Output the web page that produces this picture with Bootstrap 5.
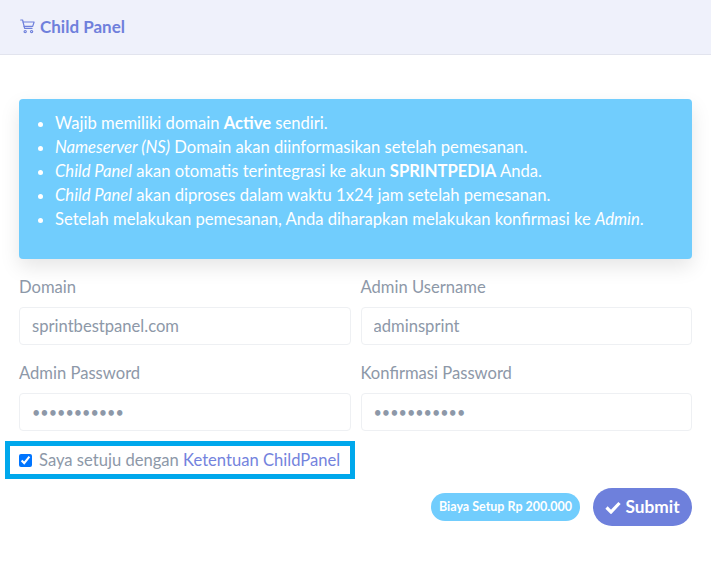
<!DOCTYPE html>
<html lang="en">
<head>
    <meta charset="UTF-8">
    <title>Child Panel</title>
    <link href="https://cdn.jsdelivr.net/npm/bootstrap@5.3.3/dist/css/bootstrap.min.css" rel="stylesheet">
    <style>
        body {
            font-family: "Lato", "Open Sans", sans-serif;
            color: #8d98a8;
            background-color: #fff;
            font-size: 16.6px;
        }

        .panel-head {
            height: 55px;
            background-color: #eff1fb;
            border-bottom: 1px solid #e2e4ee;
            padding: 0 19px 1px 20px;
            gap: 5px;
            color: #6f80dc;
            font-weight: 700;
            font-size: 17px;
        }

        .panel-body {
            padding: 44px 19px 0;
        }

        .info-box {
            height: 160px;
            background-color: #71cdfd;
            color: #fff;
            border-radius: 4px;
            padding: 12px 16px;
            margin-bottom: 16px;
            box-shadow: 0 8px 20px rgba(0, 0, 0, .1);
            line-height: 24px;
        }

        .info-box ul {
            margin: 0;
            padding-left: 20px;
        }

        .field-row {
            --bs-gutter-x: 10px;
        }

        .field-label {
            display: block;
            height: 24px;
            line-height: 24px;
            margin-bottom: 8px;
            color: #8d98a8;
        }

        .field-input {
            height: 38px;
            border: 1px solid #eef0f3;
            border-radius: 4px;
            padding: 0 12px;
            color: #8d98a8;
            font-size: 16.6px;
            box-shadow: none;
        }

        .field-input[type="password"] {
            font-size: 14.4px;
        }

        .field-gap {
            margin-bottom: 16px;
        }

        .terms-box {
            width: 350px;
            height: 38px;
            margin: 10px 0 9px -14px;
            border: 5px solid #00a8ec;
            padding: 0 9px;
            white-space: nowrap;
        }

        .terms-box input {
            width: 13px;
            height: 13px;
            margin: 0 7px 0 0;
        }

        .terms-box a {
            color: #7483dd;
            text-decoration: none;
        }

        .cost-tag {
            width: 149px;
            height: 28px;
            margin-right: 13px;
            border-radius: 14px;
            background-color: #71cdfd;
            color: #fff;
            font-size: 12.5px;
            font-weight: 700;
        }

        .send-btn {
            width: 99px;
            height: 38px;
            border-radius: 19px;
            border: none;
            background-color: #6e80dc;
            color: #fff;
            font-weight: 700;
            font-size: 17.3px;
            padding: 0;
        }
    </style>
</head>
<body>

<!-- Header -->
<div class="panel-head d-flex align-items-center">
    <svg width="15" height="15" viewBox="0 0 15 15" fill="none" stroke="#6f80dc" stroke-width="1.2" stroke-linecap="round" stroke-linejoin="round">
        <path d="M.7 1h1.9l2 8.4h7.4"/>
        <path d="M3.1 3h11l-1.4 4.4H4.1"/>
        <circle cx="5.2" cy="12.6" r="1.1"/>
        <circle cx="11.6" cy="12.6" r="1.1"/>
    </svg>
    <span>Child Panel</span>
</div>

<div class="panel-body">
    <div class="info-box">
        <ul>
            <li>Wajib memiliki domain <b>Active</b> sendiri.</li>
            <li><i>Nameserver (NS)</i> Domain akan diinformasikan setelah pemesanan.</li>
            <li><i>Child Panel</i> akan otomatis terintegrasi ke akun <b>SPRINTPEDIA</b> Anda.</li>
            <li><i>Child Panel</i> akan diproses dalam waktu 1x24 jam setelah pemesanan.</li>
            <li>Setelah melakukan pemesanan, Anda diharapkan melakukan konfirmasi ke <i>Admin</i>.</li>
        </ul>
    </div>

    <form>
        <div class="row field-row field-gap">
            <div class="col-6">
                <label class="field-label">Domain</label>
                <input type="text" class="form-control field-input" value="sprintbestpanel.com">
            </div>
            <div class="col-6">
                <label class="field-label">Admin Username</label>
                <input type="text" class="form-control field-input" value="adminsprint">
            </div>
        </div>
        <div class="row field-row">
            <div class="col-6">
                <label class="field-label">Admin Password</label>
                <input type="password" class="form-control field-input" value="sprintpanel">
            </div>
            <div class="col-6">
                <label class="field-label">Konfirmasi Password</label>
                <input type="password" class="form-control field-input" value="sprintpanel">
            </div>
        </div>

        <div class="terms-box d-flex align-items-center">
            <input type="checkbox" checked>
            <span>Saya setuju dengan <a href="#">Ketentuan ChildPanel</a></span>
        </div>

        <div class="d-flex justify-content-end align-items-center">
            <span class="cost-tag d-flex align-items-center justify-content-center">Biaya Setup Rp 200.000</span>
            <button type="submit" class="send-btn d-flex align-items-center justify-content-center gap-1">
                <svg width="16" height="13" viewBox="0 0 16 13" fill="none" stroke="#fff" stroke-width="3.2">
                    <path d="M1.5 6.5 6 11 14.5 2"/>
                </svg>
                Submit
            </button>
        </div>
    </form>
</div>

<script src="https://cdn.jsdelivr.net/npm/bootstrap@5.3.3/dist/js/bootstrap.bundle.min.js"></script>
</body>
</html>
